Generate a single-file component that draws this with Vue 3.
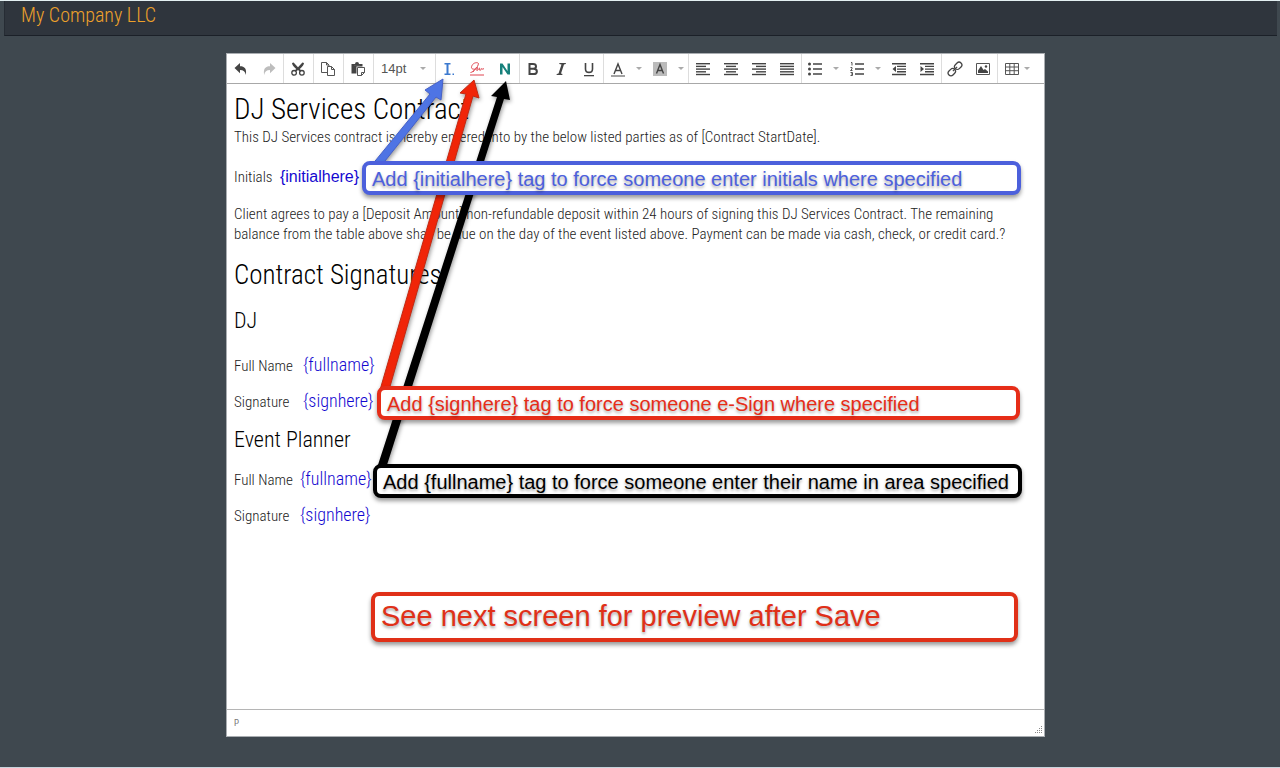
<script setup>
import { ref } from 'vue'

const size = ref('14pt')
const bars = {
  left: [[1, 13], [1, 9], [1, 13], [1, 9], [1, 13]],
  center: [[1, 13], [3, 9], [1, 13], [3, 9], [1, 13]],
  right: [[1, 13], [5, 9], [1, 13], [5, 9], [1, 13]],
  justify: [[1, 13], [1, 13], [1, 13], [1, 13], [1, 13]],
}
const aligns = Object.keys(bars)
const callouts = [
  { id: 'initial', text: 'Add {initialhere} tag to force someone enter initials where specified' },
  { id: 'sign', text: 'Add {signhere} tag to force someone e-Sign where specified' },
  { id: 'name', text: 'Add {fullname} tag to force someone enter their name in area specified' },
  { id: 'next', text: 'See next screen for preview after Save' },
]
const parties = [
  { title: 'DJ', id: 'dj' },
  { title: 'Event Planner', id: 'planner' },
]
</script>

<template>
  <div class="page">
    <header class="topbar"><a href="#">My Company LLC</a></header>

    <main class="editor">
      <div class="toolbar" role="toolbar" aria-label="Formatting">
        <div class="group">
          <button aria-label="Undo"><svg viewBox="0 0 16 16"><path d="M7 2v3.200c4.600 0 7 2.600 5.800 8.800C12.300 10.500 10.500 9 7 9v3.200L1.500 7z" /></svg></button>
          <button aria-label="Redo" class="off"><svg viewBox="0 0 16 16"><path d="M9 2v3.200c-4.600 0-7 2.600-5.800 8.800C3.700 10.500 5.500 9 9 9v3.200L14.500 7z" /></svg></button>
        </div>
        <div class="group single">
          <button aria-label="Cut"><svg viewBox="0 0 16 16"><path d="M2 2 3.600 1.500 8 6.200l4.400-4.700L14 2c0 1.500-1.500 3.500-4.200 6l1.700 1.500-1.500 1.200L8 9l-2 1.700-1.500-1.200L6.200 8C3.500 5.500 2 3.500 2 2z" /><g fill="none" stroke="#444" stroke-width="1.300"><circle cx="4.100" cy="11.800" r="2.300" /><circle cx="11.900" cy="11.800" r="2.300" /></g></svg></button>
        </div>
        <div class="group single">
          <button aria-label="Copy"><svg viewBox="0 0 16 16"><g class="line"><path d="M7 11.500H1.500v-10h5L9 4v1.500M6.500 1.500V4H9" /><path d="M7.500 5.500h4l3 3v6h-7zM11.500 5.500v3h3" /></g></svg></button>
        </div>
        <div class="group single">
          <button aria-label="Paste"><svg viewBox="0 0 16 16"><path d="M1.500 3H5a2 2 0 0 1 4 0h3.500v2.500h-6v7h-5z" /><path class="line" d="M4 4.500h6" stroke="#fff" /><path class="line fill" d="M7.500 6.500h7v5l-3 3h-4zM11.500 14.500v-3h3" /></svg></button>
        </div>
        <div class="group fontsize">
          <select v-model="size" aria-label="Font size"><option>14pt</option></select>
          <i class="caret"></i>
        </div>
        <div class="group">
          <button aria-label="Insert initials tag"><svg viewBox="0 0 16 16"><path fill="#3b79cf" d="M3.500 2h6v1.500h-2v9h2V14h-6v-1.500h2v-9h-2zM11.500 12.500H13V14h-1.500z" /></svg></button>
          <button aria-label="Insert signature tag"><svg viewBox="0 0 16 16"><path fill="none" stroke="#e04550" d="M1 14h14M1.500 11.500C5 11 9 6 9.500 2.500 8.500 1 4.500 1.500 3 4.500s.5 4 2.500 3.500M4 11c2-4 4-5 4.500-4.500S7 9.500 8 9.500s2-2.500 2.500-2.500-.5 2.500.5 2.500 1.500-2.500 2-2 0 1.500 2 0" /></svg></button>
          <button aria-label="Insert name tag"><svg viewBox="0 0 16 16"><path fill="#16807b" d="M3 13.500v-11h2.500L10.500 10V2.500H13v11h-2.500L5.500 6v7.500z" /></svg></button>
        </div>
        <div class="group">
          <button aria-label="Bold"><svg viewBox="0 0 16 16"><path fill="none" stroke="#444" stroke-width="2" d="M4.500 3H8c4 0 4 4.800 0 4.800H4.500zM4.500 7.800h4c4.500 0 4.500 5.200 0 5.200h-4z" /></svg></button>
          <button aria-label="Italic"><svg viewBox="0 0 16 16"><path d="M6.500 2H13l-.3 1-1.700.4L8 12.600l1.500.4-.3 1H3.500l.3-1 1.700-.4 3-9.200L6.200 3z" /></svg></button>
          <button aria-label="Underline"><svg viewBox="0 0 16 16"><path d="M3 14h10v1.300H3z" /><path fill="none" stroke="#444" stroke-width="1.600" d="M4.500 2v6c0 4.500 7 4.500 7 0V2" /></svg></button>
        </div>
        <div class="group shifted">
          <div class="split"><button aria-label="Text color"><svg viewBox="0 0 16 16"><path d="M1 14.500h14v1H1z" /><path fill="none" stroke="#444" stroke-width="1.400" d="M4 13 8 3l4 10M5.400 9.500h5.200" /></svg></button><button class="more" aria-label="Text color options"><i class="caret"></i></button></div>
          <div class="split"><button aria-label="Background color"><svg viewBox="0 0 16 16"><path fill="#bbb" d="M1 1h14v14H1z" /><path fill="none" stroke="#444" stroke-width="1.400" d="M4.500 12.500 8 3.500l3.500 9M5.700 9.500h4.600" /></svg></button><button class="more" aria-label="Background color options"><i class="caret"></i></button></div>
        </div>
        <div class="group shifted">
          <button v-for="a in aligns" :key="a" :aria-label="'Align ' + a"><svg viewBox="0 0 16 16"><rect v-for="(b, i) in bars[a]" :key="i" :x="b[0]" :y="2 + i * 2.700" :width="b[1] + 1" height="1.400" /></svg></button>
        </div>
        <div class="group">
          <div class="split"><button aria-label="Bullet list"><svg viewBox="0 0 16 16"><circle cx="2.500" cy="3" r="1.500" /><circle cx="2.500" cy="8" r="1.500" /><circle cx="2.500" cy="13" r="1.500" /><path d="M6 2.300h9v1.400H6zM6 7.300h9v1.400H6zM6 12.300h9v1.400H6z" /></svg></button><button class="more" aria-label="Bullet list options"><i class="caret"></i></button></div>
          <div class="split"><button aria-label="Numbered list"><svg viewBox="0 0 16 16"><path class="line" d="M2 1.500h1v3M1.500 6.500H3v1.500L1.500 9.500H3.500M1.500 11.500h2v3h-2M2 13h1.500" /><path d="M6 2.300h9v1.400H6zM6 7.300h9v1.400H6zM6 12.300h9v1.400H6z" /></svg></button><button class="more" aria-label="Numbered list options"><i class="caret"></i></button></div>
          <button aria-label="Decrease indent"><svg viewBox="0 0 16 16"><path d="M1 2h14v1.400H1zM6 4.700h9v1.400H6zM6 7.400h9v1.400H6zM6 10.100h9v1.400H6zM1 12.800h14v1.400H1zM5 5v6L1.500 8z" /></svg></button>
          <button aria-label="Increase indent"><svg viewBox="0 0 16 16"><path d="M1 2h14v1.400H1zM6 4.700h9v1.400H6zM6 7.400h9v1.400H6zM6 10.100h9v1.400H6zM1 12.800h14v1.400H1zM1.500 5v6L5 8z" /></svg></button>
        </div>
        <div class="group">
          <button aria-label="Insert link"><svg viewBox="0 0 16 16"><g fill="none" stroke="#444" stroke-width="1.300" transform="rotate(-45 8 8)"><rect x="-.5" y="5.200" width="8" height="5.600" rx="2.800" /><rect x="8.500" y="5.200" width="8" height="5.600" rx="2.800" /><path d="M5 8h6" /></g></svg></button>
          <button aria-label="Insert image"><svg viewBox="0 0 16 16"><path class="line" d="M1.500 2.500h13v11h-13z" /><path d="M3 12V9.500L6 5l2.500 4L10 8l3 2.500V12z" /><circle cx="11" cy="5.500" r="1.200" /></svg></button>
        </div>
        <div class="group shifted">
          <div class="split"><button aria-label="Table"><svg viewBox="0 0 16 16"><path class="line" d="M1.500 2.500h13v11h-13zM1.500 6h13M1.500 9.700h13M5.800 2.500v11M10.200 2.500v11" /></svg></button><button class="more near" aria-label="Table options"><i class="caret"></i></button></div>
        </div>
      </div>

      <article class="document">
        <h1>DJ Services Contract</h1>
        <p>This DJ Services contract is hereby entered into by the below listed parties as of [Contract StartDate].</p>
        <p class="initials">Initials <span class="tag plain">{initialhere}</span></p>
        <p class="terms">Client agrees to pay a [Deposit Amount] non-refundable deposit within 24 hours of signing this DJ Services Contract. The remaining balance from the table above shall be due on the day of the event listed above. Payment can be made via cash, check, or credit card.?</p>
        <h2>Contract Signatures</h2>
        <section v-for="p in parties" :key="p.id" :class="p.id">
          <h3>{{ p.title }}</h3>
          <p><span class="label">Full Name</span><span class="tag">{fullname}</span></p>
          <p><span class="label">Signature</span><span class="tag">{signhere}</span></p>
        </section>
      </article>

      <footer class="status"><span>P</span>
        <svg class="grip" viewBox="0 0 9 9" aria-hidden="true"><path stroke="#888" stroke-dasharray="1 1" d="M8.500 1v8M6.500 3v6M4.500 5v4M2.500 7v2" /></svg>
      </footer>

      <div class="notes">
        <svg class="arrows" aria-hidden="true">
          <path fill="#4e74e4" stroke="#4560c8" d="M144 112 203 40 198 36 216 25 214 46 209 43 154 112z" />
          <path fill="#000" d="M150 414 270 43 264 42 279 27 283 46 277 45 159 414z" />
          <path fill="#f02508" stroke="#c32912" d="M153 336 239 40 233 39 247 26 252 44 246 42 162 336z" />
        </svg>
        <div v-for="c in callouts" :key="c.id" class="callout" :class="c.id">{{ c.text }}</div>
      </div>
    </main>
  </div>
</template>

<style>
body { margin: 0; }
</style>

<style scoped>
* { box-sizing: border-box; }
.page {
  display: flex;
  flex-direction: column;
  min-height: 100vh;
  border-top: 1px solid #e4f0f2;
  border-bottom: 1px solid #c8d4dc;
  background: #3f484f;
  font-family: "Liberation Sans Narrow", "Roboto Condensed", "Liberation Sans", sans-serif;
  font-weight: 300;
}
.topbar {
  height: 35px;
  margin: 0 3px 0 4px;
  padding-left: 16px;
  background: #2f353d;
  border-left: 1px solid #262c34;
  border-bottom: 1px solid #1b2028;
}
.topbar a {
  color: #eda12b;
  font-size: 20px;
  line-height: 28px;
  text-decoration: none;
}
.editor {
  position: relative;
  display: flex;
  flex: 1;
  flex-direction: column;
  width: 64%;
  min-width: 819px;
  margin: 17px 0 30px 226px;
  border: 1px solid #a9adb1;
  background: #fff;
}
.toolbar {
  display: flex;
  height: 30px;
  border-bottom: 1px solid #a8a8a8;
}
.group { display: flex; position: relative; }
.group + .group { box-shadow: inset 1px 0 #ddd; }
.shifted { padding-left: 1px; }
.toolbar button {
  display: flex;
  align-items: center;
  justify-content: center;
  width: 28px;
  padding: 0;
  border: 0;
  background: none;
}
.toolbar .single button { width: 30px; }
.toolbar svg { width: 16px; height: 16px; fill: #444; }
.toolbar .off { opacity: 0.35; }
.line { fill: none; stroke: #555; }
.fill { fill: #fff; }
.split { display: flex; width: 42px; }
.toolbar .split .more { width: 13px; }
.toolbar .split .near { width: 2px; }
.caret {
  width: 0;
  border: 3px solid transparent;
  border-top: 3px solid #aaa;
  border-bottom: 0;
}
.fontsize { align-items: center; width: 62px; }
.fontsize select {
  width: 47px;
  padding: 0 0 0 8px;
  appearance: none;
  border: 0;
  background: none;
  color: #555;
  font: 13px "Liberation Sans", sans-serif;
}
.document {
  flex: 1;
  padding: 8px 12px 8px 7px;
  color: #222;
  font-size: 15px;
  line-height: 20px;
}
h1, h2, h3 { margin: 0; color: #000; font-weight: 300; }
h1 { font-size: 29px; line-height: 35px; }
h2 { font-size: 27px; line-height: 32px; }
h3 { font-size: 22px; line-height: 26px; }
p { margin: 0; }
.initials { margin: 20px 0 17px; }
.terms { margin-bottom: 15px; }
.dj { margin: 17px 0 16px; }
.dj h3 { margin-bottom: 21px; }
.planner h3 { margin-bottom: 16px; }
section p { height: 20px; }
section p + p { margin-top: 16px; }
.label { display: inline-block; width: 66px; }
.dj .label { width: 69px; }
.tag { color: #1408d0; font-size: 18px; }
.plain { margin-left: 4px; font-family: "Liberation Sans", sans-serif; font-size: 16px; }
.status {
  display: flex;
  align-items: center;
  justify-content: space-between;
  height: 27px;
  padding: 0 2px 0 7px;
  border-top: 1px solid #b5b5b5;
  color: #777;
  font-size: 9px;
  font-weight: 400;
}
.grip { align-self: flex-end; width: 9px; height: 9px; margin-bottom: 2px; }
.notes { position: absolute; inset: 0; pointer-events: none; }
.arrows {
  position: absolute;
  width: 100%;
  height: 100%;
  filter: drop-shadow(1px 2px 2px rgba(0, 0, 0, 0.4));
}
.callout {
  position: absolute;
  height: 34px;
  padding-left: 6px;
  border: 4px solid;
  border-radius: 8px;
  background: #fff;
  box-shadow: 0 3px 4px rgba(0, 0, 0, 0.4);
  font-family: "Liberation Sans", sans-serif;
  font-size: 20px;
  font-weight: 400;
  line-height: 28px;
  text-shadow: 0 2px 3px rgba(0, 0, 0, 0.35);
  white-space: nowrap;
}
.initial { top: 107px; left: 135px; width: 659px; color: #4c60dc; }
.sign { top: 332px; left: 150px; width: 643px; color: #e62d18; }
.name { top: 410px; left: 146px; width: 649px; color: #000; }
.next { top: 538px; left: 144px; width: 647px; height: 50px; color: #e03018; font-size: 29px; line-height: 40px; }
</style>
